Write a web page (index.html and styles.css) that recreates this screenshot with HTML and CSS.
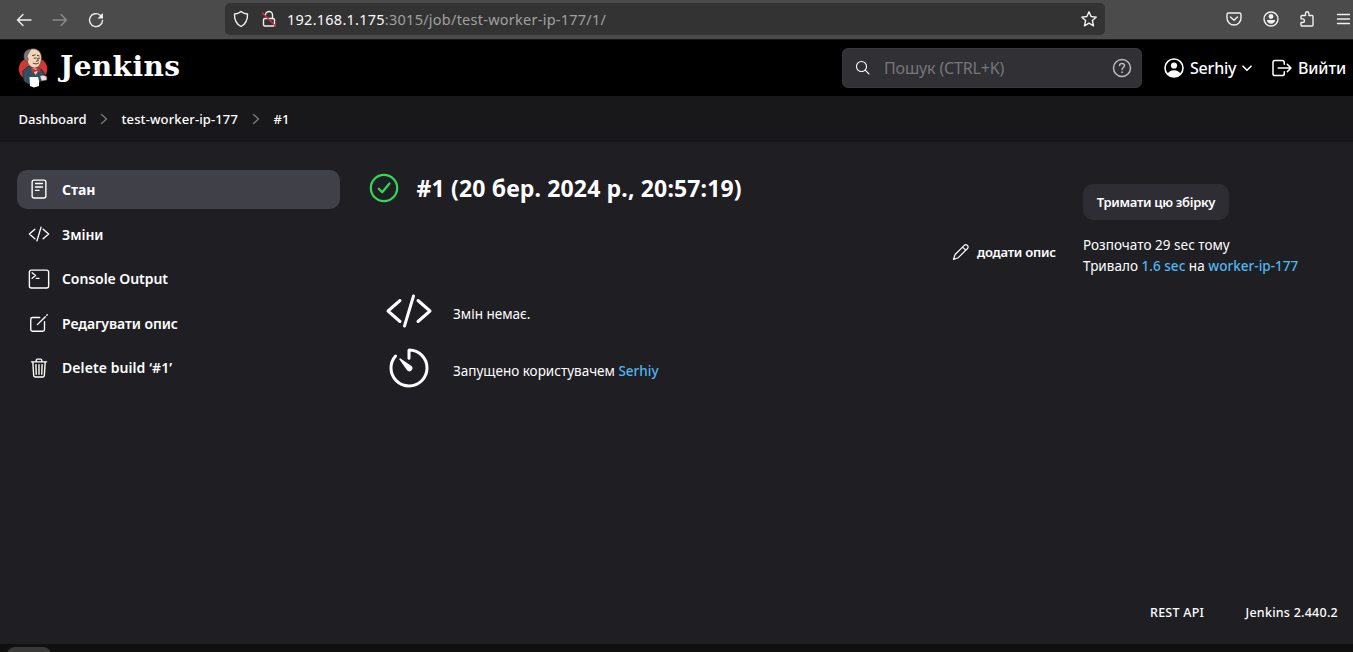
FILE: index.html
```
<!DOCTYPE html>
<html lang="uk">
<head>
<meta charset="utf-8">
<title>test-worker-ip-177 #1 [Jenkins]</title>
<link rel="stylesheet" href="styles.css">
</head>
<body>
<div class="browser">
  <div class="nav">
    <svg width="16" height="16" viewBox="0 0 16 16"><path d="M15 8H1.500M7 2.500L1.500 8 7 13.500"/></svg>
    <svg class="dim" width="16" height="16" viewBox="0 0 16 16"><path d="M1 8h13.500M9 2.500L14.500 8 9 13.500"/></svg>
    <svg width="16" height="16" viewBox="0 0 16 16"><path d="M14.500 8.500A6.500 6.500 0 1 1 12 3l2 2"/><path class="solid" d="M15 1v5.500H9.500z"/></svg>
  </div>
  <div class="urlbar">
    <svg width="16" height="18" viewBox="0 0 16 18"><path d="M8 1.500c2 1.700 4.300 2.500 6.500 2.500.3 6-1.800 10-6.500 12.500C3.300 14 1.200 10 1.500 4 3.700 4 6 3.200 8 1.500z"/></svg>
    <svg class="lock" width="16" height="18" viewBox="0 0 16 18"><path d="M4.500 5a3.500 3.500 0 0 1 7 0v3.500"/><rect x="2.500" y="8.500" width="11" height="7.500" rx="1.500"/><path class="slash" d="M1.500 3L14.500 16"/></svg>
    <span class="url"><b>192.168.1.175</b>:3015/job/test-worker-ip-177/1/</span>
    <svg class="star" width="18" height="18" viewBox="0 0 18 18"><path d="M9 1.800l2.100 4.700 5.200.6-3.900 3.500 1.100 5.200L9 13.200l-4.500 2.600 1.100-5.200-3.900-3.500 5.200-.6z"/></svg>
  </div>
  <div class="tools">
    <svg width="16" height="16" viewBox="0 0 16 16"><path d="M2.500 2h11A1.500 1.500 0 0 1 15 3.500V7A7 7 0 0 1 1 7V3.500A1.500 1.500 0 0 1 2.500 2zM4.500 6L8 9.300 11.500 6"/></svg>
    <svg width="16" height="16" viewBox="0 0 16 16"><circle cx="8" cy="8" r="7"/><circle class="solid" cx="8" cy="5.500" r="2.400"/><path class="solid" d="M3.800 9h8.400c-.6 2.500-2 3.700-4.200 3.700S4.400 11.500 3.800 9z"/></svg>
    <svg width="16" height="16" viewBox="0 0 16 16"><path d="M2 7V5.500a1 1 0 0 1 1-1h3.500V2.500a1.700 1.700 0 0 1 3.400 0v2H13a1 1 0 0 1 1 1V14a1 1 0 0 1-1 1H3a1 1 0 0 1-1-1v-2.500h1.600a1.800 1.800 0 0 0 0-3.600H2"/></svg>
    <svg width="14" height="16" viewBox="0 0 14 16"><path d="M1.500 3.500h12M1.500 8h12M1.500 12.500h12"/></svg>
  </div>
</div>

<header class="header">
  <a class="brand">
    <svg width="30" height="42" viewBox="0 0 30 42">
      <ellipse cx="15" cy="22" rx="14.300" ry="12" fill="#d33833"/>
      <path d="M5 24l5-4.500 9 1 5 2.500 2.500 4-.5 5.500-3 1.500-2 2-11 1-4-3z" fill="#335061" stroke="#172b38" stroke-width=".8"/>
      <path d="M7.500 7c2-5 8-6.500 12-4 4 2.300 4.300 7 3.600 11-.8 4.500-3.500 7.200-6.800 6.900C11.500 20.500 8.500 16 7.500 7z" fill="#f0d6b7" stroke="#5c4238" stroke-width=".7"/>
      <path d="M12.500 2C7 2.500 4.800 7.500 6.300 12l2.700 3.500 1.300-3.200L9 9l2-3.500z" fill="#817577" stroke="#3f3537" stroke-width=".5"/>
      <path d="M14.500 8.600l2.500-.7M19.300 8.400l1.800.5M16.300 11.200h1.200M20.500 11.200h1M19 11l1.500 2.600-2 .5M15.300 16.200c2 1 3.700 1 5.300-.2" fill="none" stroke="#4b352c" stroke-width="1"/>
      <path d="M13.500 21l4 7 4-6z" fill="#d5dce3"/>
      <path d="M13 20.500l4.500 2.200 4-1.500.5 4-3.700-1-4 1.800z" fill="#d72b2b"/>
      <path d="M11.500 30h8.500l1 4v5l-5 1.500-4-1.500z" fill="#fff"/>
      <path d="M22 29l3-.8 3.800 1.300v3.500l-5 1z" fill="#e8e3df" stroke="#555" stroke-width=".5"/>
    </svg>
    <span class="wordmark">Jenkins</span>
  </a>
  <div class="search">
    <svg width="16" height="16" viewBox="0 0 16 16"><circle cx="6.500" cy="6.500" r="5"/><path d="M10.200 10.200L14 14"/></svg>
    <span class="placeholder">Пошук (CTRL+K)</span>
    <svg class="help" width="20" height="20" viewBox="0 0 20 20"><circle cx="10" cy="10" r="8.500"/><path d="M7.500 7.600C7.600 6.200 8.700 5.500 10 5.500s2.500.8 2.500 2.100c0 1.900-2.400 1.900-2.400 4"/><circle class="solid" cx="10.100" cy="14.200" r=".9"/></svg>
  </div>
  <a class="user">
    <svg width="20" height="20" viewBox="0 0 20 20"><circle cx="10" cy="10" r="9"/><circle class="solid" cx="10" cy="7.500" r="3.100"/><path class="solid" d="M3.600 16c1-2.700 3.500-3.800 6.400-3.800s5.400 1.100 6.400 3.800A9.300 9.300 0 0 1 10 19a9.300 9.300 0 0 1-6.400-3z"/></svg>
    <span class="user-name">Serhiy</span>
    <svg class="chevron" width="10" height="7" viewBox="0 0 10 7"><path d="M1 1.200L5 5.300 9 1.200"/></svg>
  </a>
  <a class="logout">
    <svg width="24" height="24" viewBox="0 0 512 512"><path d="M304 336v40a40 40 0 01-40 40H104a40 40 0 01-40-40V136a40 40 0 0140-40h152c22.090 0 48 17.910 48 40v40M368 336l80-80-80-80M176 256h256"/></svg>
    <span class="logout-text">Вийти</span>
  </a>
</header>

<nav class="crumbs">
  <span class="crumb-a">Dashboard</span>
  <svg width="8" height="12" viewBox="0 0 8 12"><path d="M1.500 1.500L6.500 6l-5 4.500"/></svg>
  <span class="crumb-b">test-worker-ip-177</span>
  <svg width="8" height="12" viewBox="0 0 8 12"><path d="M1.500 1.500L6.500 6l-5 4.500"/></svg>
  <span class="crumb-c">#1</span>
</nav>

<main class="page">
  <aside class="side">
    <a class="task active"><svg viewBox="0 0 512 512"><rect x="96" y="48" width="320" height="416" rx="48"/><path d="M176 128h160M176 208h160M176 288h80"/></svg><span>Стан</span></a>
    <a class="task"><svg viewBox="0 0 512 512"><path d="M160 368L32 256l128-112M352 368l128-112-128-112M304 96l-96 320"/></svg><span>Зміни</span></a>
    <a class="task"><svg viewBox="0 0 512 512"><rect x="32" y="48" width="448" height="416" rx="48"/><path d="M96 112l80 64-80 64M192 240h64"/></svg><span>Console Output</span></a>
    <a class="task"><svg viewBox="0 0 512 512"><path d="M384 224v184a40 40 0 01-40 40H104a40 40 0 01-40-40V168a40 40 0 0140-40h167.480M218 294L404 108M436 76l12-12"/></svg><span>Редагувати опис</span></a>
    <a class="task delete"><svg viewBox="0 0 512 512"><path d="M112 112l20 320c.950 18.490 14.400 32 32 32h184c17.670 0 30.870-13.510 32-32l20-320M80 112h352M192 112V72a24 24 0 0124-24h80a24 24 0 0124 24v40M256 176v224M184 176l8 224M328 176l-8 224"/></svg><span>Delete build ‘#1’</span></a>
  </aside>
  <section class="build">
    <h1 class="title">
      <svg width="30" height="30" viewBox="0 0 30 30"><circle cx="15" cy="15" r="13.200"/><path d="M9.800 15.700l3.400 3.600 7.300-8.800"/></svg>
      <span>#1 (20 бер. 2024 р., 20:57:19)</span>
    </h1>
    <div class="row changes"><svg width="48" height="48" viewBox="0 0 512 512"><path d="M160 368L32 256l128-112M352 368l128-112-128-112M304 96l-96 320"/></svg><span>Змін немає.</span></div>
    <div class="row cause"><svg width="48" height="48" viewBox="0 0 512 512"><path d="M112.910 128A191.850 191.850 0 0064 254c-1.180 106.350 85.650 193.800 192 194 106.200.2 192-85.830 192-192 0-104.540-83.550-189.610-187.500-192a4.360 4.360 0 00-4.500 4.370V152"/><path class="solid" d="M233.380 278.630l-79-113a8.130 8.130 0 0111.320-11.320l113 79a32.500 32.500 0 01-37.250 53.260 33.210 33.210 0 01-8.070-7.940z"/></svg><span>Запущено користувачем <a class="link">Serhiy</a></span></div>
  </section>
  <a class="describe"><svg width="18" height="18" viewBox="0 0 18 18"><path d="M1.500 16.500l1.600-5L12.300 2.300a2.100 2.100 0 0 1 3 0l.2.2a2.100 2.100 0 0 1 0 3L6.300 14.700zM11.300 4.800l1.900 1.900"/></svg><span>додати опис</span></a>
  <section class="info">
    <button class="keep">Тримати цю збірку</button>
    <p class="line">Розпочато 29 sec тому</p>
    <p class="line">Тривало <a class="link">1.6 sec</a> на <a class="link">worker-ip-177</a></p>
  </section>
</main>
<footer class="footer"><span class="f1">REST API</span><span class="f2">Jenkins 2.440.2</span></footer>
<div class="desk"><div class="dock"></div></div>
</body>
</html>
```

FILE: styles.css
```
* { box-sizing: border-box; }
body { margin: 0; width: 1353px; height: 652px; overflow: hidden; display: flex; flex-direction: column; background: #1f1e23; color: #fff; font-family: "Noto Sans", "Open Sans", sans-serif; font-size: 14px; }
svg { display: block; flex: none; fill: none; stroke: currentColor; stroke-width: 1.4; stroke-linecap: round; stroke-linejoin: round; }
svg .solid { fill: currentColor; stroke: none; }
span, p, button { white-space: nowrap; }

.browser { height: 40px; flex: none; display: flex; background: #4b4b4b; border-bottom: 1px solid #18181a; color: #f0f0f0; }
.nav { width: 225px; padding: 12px 0 0 16px; display: flex; gap: 20px; }
.dim { color: #8b8b8b; }
.urlbar { width: 880px; height: 32px; margin-top: 3px; padding: 0 7px 0 8px; border-radius: 5px; background: #333; display: flex; align-items: center; }
.lock { margin-left: 12px; }
.slash { stroke: #e22850; }
.url { width: 793px; margin-left: 10px; color: #a0a0a0; font-size: 14.500px; letter-spacing: .25px; }
.url b { color: #fafafa; font-weight: 400; }
.tools { padding: 11px 0 0 121px; display: flex; gap: 20.500px; }

.header { height: 56px; flex: none; display: flex; align-items: center; background: #000; }
.brand { width: 842px; padding-left: 18px; display: flex; align-items: center; }
.brand svg { stroke: none; }
.wordmark { margin: -3px 0 0 12px; font: bold 28px "DejaVu Serif", serif; letter-spacing: .4px; }
.search { width: 300px; height: 40px; padding: 0 9px 0 12px; border-radius: 6px; background: #313035; border: 1px solid #38373c; display: flex; align-items: center; }
.search svg { stroke-width: 1.1; }
.placeholder { width: 230px; margin-left: 13px; color: #77767b; font-size: 16px; letter-spacing: -.15px; }
.search .help { color: #bbb; stroke-width: 1.5; }
.user { width: 108px; margin-left: 22px; display: flex; align-items: center; font-size: 16px; font-weight: 500; }
.user svg { stroke-width: 1.6; }
.user-name { width: 52px; margin-left: 6px; letter-spacing: -.2px; }
.logout { display: flex; align-items: center; font-size: 16px; font-weight: 500; }
.logout svg { margin-left: -2px; stroke-width: 32; }
.logout-text { margin-left: 4px; letter-spacing: -.15px; }

.crumbs { height: 46px; flex: none; padding-left: 18.500px; display: flex; align-items: center; background: #18181a; font-size: 13px; font-weight: 500; }
.crumbs svg { color: #77767b; }
.crumb-a { width: 81px; }
.crumb-b { width: 130px; margin-left: 14px; letter-spacing: .12px; }
.crumb-c { margin-left: 14px; }

.page { height: 442px; flex: none; display: flex; align-items: flex-start; }
.side { width: 323px; margin: 28px 0 0 17px; display: flex; flex-direction: column; gap: 5.500px; }
.task { height: 39px; padding-left: 11px; border-radius: 10px; display: flex; align-items: center; gap: 12px; font-size: 14px; font-weight: 600; letter-spacing: -.07px; }
.task svg { width: 22px; height: 22px; stroke-width: 32; }
.active { background: #404048; font-weight: 700; }
.active svg { margin-top: -2px; }
.delete { letter-spacing: .08px; }
.build { width: 583px; margin: 31px 0 0 29px; }
.title { height: 30px; margin: 0; display: flex; align-items: center; gap: 17.500px; font-size: 23px; font-weight: 700; letter-spacing: .15px; }
.title svg { color: #30d85c; stroke-width: 2.200; }
.row { height: 48px; padding-left: 16px; display: flex; align-items: center; gap: 20px; font-size: 13.500px; }
.row span { padding-top: 5px; }
.changes { margin-top: 84px; }
.changes svg, .cause svg { stroke-width: 32; }
.cause { margin-top: 9px; }
.link { color: #4db8f0; font-weight: 500; }
.describe { width: 131px; margin-top: 101px; display: flex; align-items: center; gap: 7px; font-size: 13px; font-weight: 600; letter-spacing: -.22px; }
.describe svg { stroke-width: 1.200; }
.info { margin-top: 42px; font-size: 13.500px; }
.keep { width: 146px; height: 36px; margin-bottom: 15px; padding: 0; border: 0; border-radius: 10px; background: #2e2d33; color: #fff; font: 600 13px "Noto Sans", sans-serif; letter-spacing: -.3px; }
.line { margin: 0; line-height: 21px; letter-spacing: .03px; }

.footer { height: 60px; flex: none; padding: 20px 0 0 1150px; display: flex; font-size: 12.500px; font-weight: 500; line-height: 18px; letter-spacing: .25px; }
.f1 { width: 95.500px; }
.desk { height: 8px; flex: none; background: #10100f; padding: 3px 0 0 7px; }
.dock { width: 44px; height: 16px; border-radius: 10px; background: #393939; }
```
